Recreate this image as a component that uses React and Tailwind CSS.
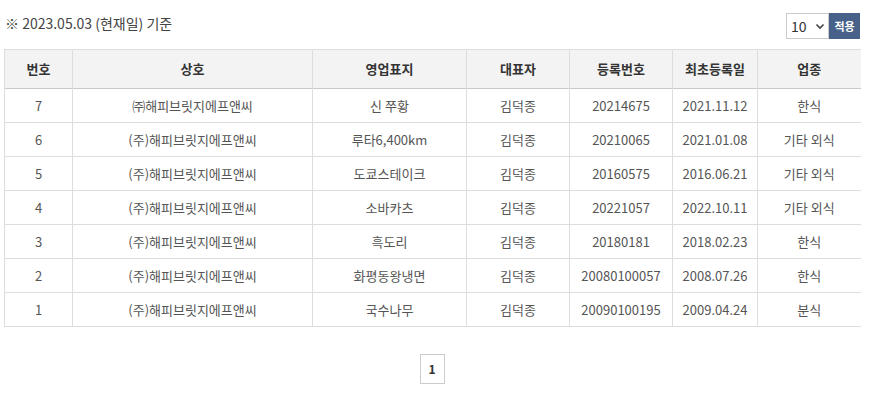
import React from "react";

const rows = [
  ["7", "㈜해피브릿지에프앤씨", "신 쭈황", "김덕종", "20214675", "2021.11.12", "한식"],
  ["6", "(주)해피브릿지에프앤씨", "루타6,400km", "김덕종", "20210065", "2021.01.08", "기타 외식"],
  ["5", "(주)해피브릿지에프앤씨", "도쿄스테이크", "김덕종", "20160575", "2016.06.21", "기타 외식"],
  ["4", "(주)해피브릿지에프앤씨", "소바카츠", "김덕종", "20221057", "2022.10.11", "기타 외식"],
  ["3", "(주)해피브릿지에프앤씨", "흑도리", "김덕종", "20180181", "2018.02.23", "한식"],
  ["2", "(주)해피브릿지에프앤씨", "화평동왕냉면", "김덕종", "20080100057", "2008.07.26", "한식"],
  ["1", "(주)해피브릿지에프앤씨", "국수나무", "김덕종", "20090100195", "2009.04.24", "분식"],
];

const widths = ["w-[68px]", "w-[240px]", "w-[154px]", "w-[103px]", "w-[103px]", "w-[85px]", "w-[103px]"];
const heads = ["번호", "상호", "영업표지", "대표자", "등록번호", "최초등록일", "업종"];

export default function App() {
  return (
    <div
      className="w-[877px] h-[397px] bg-white text-[#333]"
      style={{ fontFamily: '"Noto Sans CJK KR", "Open Sans", sans-serif' }}
    >
      <div className="flex items-start justify-between pl-[5px] pr-[17px] pt-[13px]">
        <div className="text-[14px] leading-[18px] pt-[1px] text-[#444]">※ 2023.05.03 (현재일) 기준</div>
        <div className="flex h-[26px]">
          <div className="w-[43px] h-[26px] border border-[#ccc] flex items-center justify-between pl-[4px] pr-[3px] text-[14px] text-[#333]">
            <span>10</span>
            <svg width="10" height="10" viewBox="0 0 10 10" fill="none" stroke="#444" strokeWidth="1.6">
              <path d="M1.5 3.5 L5 7 L8.5 3.5" />
            </svg>
          </div>
          <div className="w-[31px] h-[26px] bg-[#47618a] text-white text-[11px] font-bold flex items-center justify-center">
            적용
          </div>
        </div>
      </div>
      <div className="pl-[4px] pt-[10px]">
        <table className="border-collapse table-fixed w-[856px] text-[13px]">
          <thead>
            <tr className="bg-[#f3f3f3] h-[39px] border-t border-[#ddd] border-b border-b-[#c8c8c8]">
              {heads.map((h, i) => (
                <th
                  key={i}
                  className={`${widths[i]} font-bold text-[13px] text-[#333] ${i === 0 ? "border-l border-[#ddd]" : ""} ${i < 6 ? "border-r border-[#ddd]" : ""}`}
                >
                  {h}
                </th>
              ))}
            </tr>
          </thead>
          <tbody>
            {rows.map((r, ri) => (
              <tr key={ri} className="h-[34px] border-b border-[#ddd]">
                {r.map((c, ci) => (
                  <td
                    key={ci}
                    className={`text-center text-[#555] ${ci === 0 ? "border-l border-[#ddd]" : ""} ${ci < 6 ? "border-r border-[#ddd]" : ""}`}
                  >
                    {c}
                  </td>
                ))}
              </tr>
            ))}
          </tbody>
        </table>
      </div>
      <div className="flex justify-center pt-[27px] pr-[13px]">
        <div className="w-[25px] h-[30px] border border-[#ccc] flex items-center justify-center text-[12px] font-bold text-[#333]">
          1
        </div>
      </div>
    </div>
  );
}
